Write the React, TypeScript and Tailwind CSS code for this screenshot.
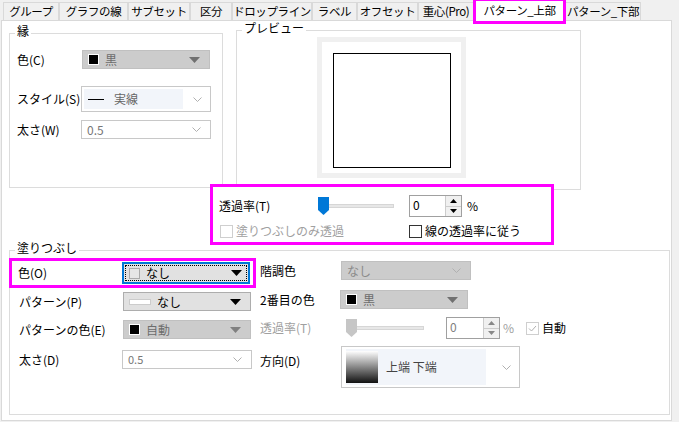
import React from "react";

const F = { fontFamily: '"Noto Sans CJK JP", "Noto Sans", sans-serif' };

const Tri = ({ c = "#000" }: { c?: string }) => (
  <svg width="11" height="6" viewBox="0 0 11 6"><path d="M0 0h11L5.5 6z" fill={c} /></svg>
);
const Chev = () => (
  <svg width="9" height="5" viewBox="0 0 9 5"><path d="M0.5 0.5L4.5 4.5L8.5 0.5" stroke="#b0b0b0" fill="none" /></svg>
);

function Combo({ w, h = 19, bg, border = "#c8c8c8", children, arrow }: any) {
  return (
    <div className="flex items-center pl-[5px] pr-[9px] border" style={{ width: w, height: h, background: bg, borderColor: border }}>
      <div className="flex-1 flex items-center gap-[6px] min-w-0">{children}</div>
      {arrow}
    </div>
  );
}

const Sq = ({ c = "#000", b = "#fff" }: any) => (
  <span className="inline-block w-[11px] h-[11px] border" style={{ background: c, borderColor: b }} />
);

function Spin({ w, dis }: { w: number; dis?: boolean }) {
  return (
    <div className="flex border border-[#a0a0a0] bg-white" style={{ width: w, height: 22 }}>
      <div className={`flex-1 pl-[3px] text-[12px] leading-[18px] ${dis ? "text-[#808080]" : ""}`}>0</div>
      <div className="w-[16px] flex flex-col border-l border-[#ccc] bg-[#f0f0f0]">
        <div className="flex-1 flex items-center justify-center border-b border-[#ccc]">
          <svg width="7" height="4"><path d="M0 4h7L3.5 0z" fill={dis ? "#888" : "#000"} /></svg>
        </div>
        <div className="flex-1 flex items-center justify-center">
          <svg width="7" height="4"><path d="M0 0h7L3.5 4z" fill={dis ? "#888" : "#000"} /></svg>
        </div>
      </div>
    </div>
  );
}

function Slider({ w, color }: { w: number; color: string }) {
  return (
    <div className="relative h-[18px]" style={{ width: w }}>
      <div className="absolute left-0 right-0 top-[7px] h-[4px] bg-[#e7e7e7] border border-[#d6d6d6]" />
      <svg className="absolute left-0 top-0" width="11" height="18" viewBox="0 0 11 18">
        <path d="M0 0h11v13l-5.5 5L0 13z" fill={color} />
      </svg>
    </div>
  );
}

const tabs = ["グループ", "グラフの線", "サブセット", "区分", "ドロップライン", "ラベル", "オフセット", "重心(Pro)"];
const tabW = [56, 69, 62, 42, 80, 45, 61, 56];

export default function App() {
  return (
    <div className="w-[679px] h-[422px] bg-[#f0f0f0] text-[12px] text-black overflow-hidden relative whitespace-nowrap" style={F}>
      {/* tabs */}
      <div className="flex h-[20px] pl-[3px] pt-[2px] items-end text-[11.5px] tracking-[-0.4px]">
        {tabs.map((t, i) => (
          <div key={t} className="h-[18px] border border-b-0 border-[#d9d9d9] bg-[#f0f0f0] flex items-center justify-center leading-none overflow-hidden" style={{ width: tabW[i] }}>{t}</div>
        ))}
        <div className="relative w-[91px] h-[21px] -mb-px bg-white border border-b-0 border-[#d9d9d9] flex items-center justify-center z-10">
          パターン_上部
          <div className="absolute -left-[2px] -right-[2px] -top-[3px] h-[26px] border-[3px] border-[#ff00ff]" />
        </div>
        <div className="h-[18px] w-[76px] border border-b-0 border-[#d9d9d9] flex items-center justify-center leading-none">パターン_下部</div>
      </div>
      {/* panel */}
      <div className="ml-[1px] w-[671px] h-[401px] bg-white border border-[#d9d9d9]">
        <div className="flex">
          <div className="relative ml-[7px] mt-[12px] w-[214px] h-[155px] border border-[#dcdcdc]">
            <span className="absolute left-[5px] -top-[9px] bg-white px-[2px] leading-none text-[12px]">縁</span>
            <div className="flex items-center mt-[16px] pl-[7px]">
              <span className="w-[65px]">色(C)</span>
              <Combo w={128} bg="#cccccc" border="#c0c0c0" arrow={<Tri c="#707070" />}><Sq /><span className="text-[#6d6d6d]">黒</span></Combo>
            </div>
            <div className="flex items-center mt-[17px] pl-[7px]">
              <span className="w-[64px]">スタイル(S)</span>
              <div className="flex items-center w-[130px] h-[26px] border border-[#c8c8c8] pl-[2px] pr-[8px]">
                <div className="flex-1 h-[20px] bg-[#f2f5fa] flex items-center gap-[10px] pl-[4px] mr-[10px]">
                  <span className="w-[16px] h-px bg-black" /><span className="text-[#666]">実線</span>
                </div>
                <Chev />
              </div>
            </div>
            <div className="flex items-center mt-[8px] pl-[7px]">
              <span className="w-[64px]">太さ(W)</span>
              <Combo w={130} bg="#fff" border="#c8c8c8" arrow={<Chev />}><span className="text-[#777]">0.5</span></Combo>
            </div>
          </div>
          <div className="relative ml-[13px] mt-[9px] w-[345px] h-[160px] border border-[#dcdcdc]">
            <span className="absolute left-[5px] -top-[9px] bg-white px-[2px] leading-none">プレビュー</span>
            <div className="ml-[80px] mt-[6px] w-[149px] h-[141px] bg-[#f0f0f0] p-[5px]">
              <div className="w-full h-full bg-white pt-[11px] pl-[11px]">
                <div className="w-[118px] h-[115px] border border-black" />
              </div>
            </div>
          </div>
        </div>
        <div className="ml-[208px] -mt-[6px] w-[344px] h-[61px] border-[3px] border-[#ff00ff] relative bg-white">
          <div className="flex items-center mt-[8px] pl-[6px]">
            <span className="w-[99px]">透過率(T)</span>
            <Slider w={76} color="#0078d7" />
            <div className="ml-[15px]"><Spin w={53} /></div>
            <span className="ml-[5px]">%</span>
          </div>
          <div className="flex items-center mt-[5px] pl-[7px]">
            <span className="w-[13px] h-[13px] border border-[#cfcfcf]" />
            <span className="ml-[3px] text-[#a0a0a0] w-[173px]">塗りつぶしのみ透過</span>
            <span className="w-[13px] h-[13px] border border-[#333]" />
            <span className="ml-[3px]">線の透過率に従う</span>
          </div>
        </div>
        <div className="relative ml-[7px] mt-[5px] w-[661px] h-[165px] border border-[#dcdcdc] flex">
          <span className="absolute left-[5px] -top-[9px] bg-white px-[2px] leading-none">塗りつぶし</span>
          <div className="w-[250px]">
            <div className="-ml-px mt-[7px] w-[247px] h-[30px] border-[3px] border-[#ff00ff] flex items-center pl-[6px]">
              <span className="w-[104px]">色(O)</span>
              <div className="w-[128px] h-[22px] border-2 border-[#0078d7] bg-[#e1e1e1] p-[1px]">
                <div className="w-full h-full border border-dotted border-black flex items-center pl-[3px] pr-[4px] gap-[6px]">
                  <Sq c="#e6e6e6" b="#aaa" /><span className="flex-1">なし</span><Tri />
                </div>
              </div>
            </div>
            <div className="flex items-center mt-[4px] pl-[9px]">
              <span className="w-[104px]">パターン(P)</span>
              <Combo w={128} bg="#e1e1e1" border="#adadad" arrow={<Tri />}><span className="w-[22px] h-[6px] bg-white border border-[#ccc]" /><span>なし</span></Combo>
            </div>
            <div className="flex items-center mt-[9px] pl-[9px]">
              <span className="w-[104px]">パターンの色(E)</span>
              <Combo w={128} bg="#cccccc" border="#c0c0c0" arrow={<Tri c="#808080" />}><Sq /><span className="text-[#6d6d6d]">自動</span></Combo>
            </div>
            <div className="flex items-center mt-[11px] pl-[9px]">
              <span className="w-[103px]">太さ(D)</span>
              <Combo w={130} bg="#fff" border="#c8c8c8" arrow={<Chev />}><span className="text-[#777] text-[11px]">0.5</span></Combo>
            </div>
          </div>
          <div className="flex-1">
            <div className="flex items-center mt-[10px]">
              <span className="w-[81px]">階調色</span>
              <Combo w={130} bg="#cccccc" border="#c0c0c0" arrow={<Chev />}><span className="text-[#8a8a8a]">なし</span></Combo>
            </div>
            <div className="flex items-center mt-[10px]">
              <span className="w-[80px]">2番目の色</span>
              <Combo w={128} bg="#cccccc" border="#c0c0c0" arrow={<Tri c="#707070" />}><Sq /><span className="text-[#6d6d6d]">黒</span></Combo>
            </div>
            <div className="flex items-center mt-[8px]">
              <span className="w-[86px] text-[#a0a0a0]">透過率(T)</span>
              <Slider w={78} color="#c6c6c6" />
              <div className="ml-[22px]"><Spin w={54} dis /></div>
              <span className="ml-[3px] text-[#a0a0a0]">%</span>
              <span className="ml-[12px] w-[13px] h-[13px] border border-[#cfcfcf] flex items-center justify-center">
                <svg width="9" height="7"><path d="M1 3.5L3.5 6L8 1" stroke="#b0b0b0" fill="none" /></svg>
              </span>
              <span className="ml-[3px]">自動</span>
            </div>
            <div className="flex items-start mt-[7px]">
              <span className="w-[81px] mt-[6px]">方向(D)</span>
              <div className="flex items-center w-[179px] h-[42px] border border-[#c8c8c8] pl-[4px] pr-[8px]">
                <div className="flex-1 h-[36px] bg-[#f2f5fa] flex items-center mr-[16px]">
                  <div className="w-[32px] h-[32px]" style={{ background: "linear-gradient(#fff, #111)" }} />
                  <span className="ml-[8px] text-[#444]">上端 下端</span>
                </div>
                <Chev />
              </div>
            </div>
          </div>
        </div>
      </div>
    </div>
  );
}
